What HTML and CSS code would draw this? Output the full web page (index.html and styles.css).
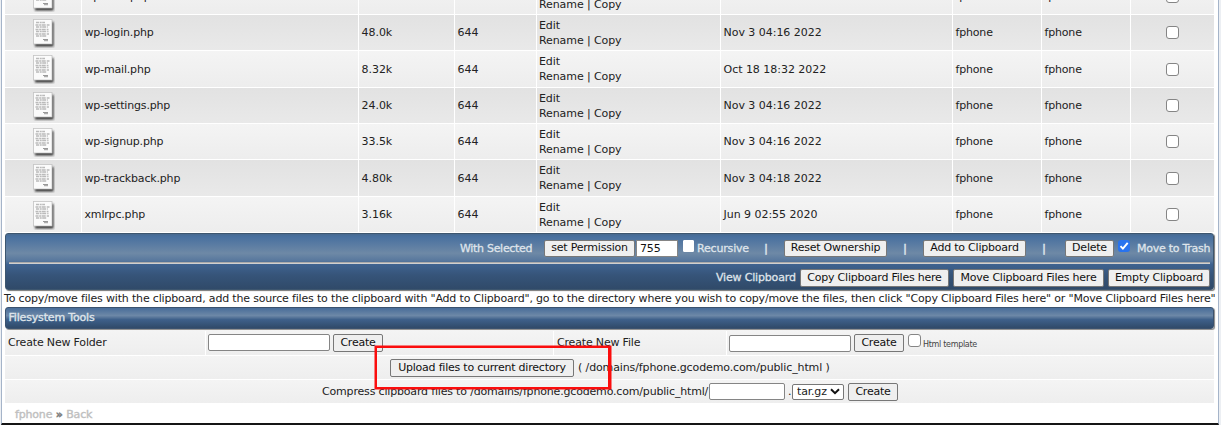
FILE: index.html
```
<!DOCTYPE html>
<html lang="en">
<head>
<meta charset="utf-8">
<title>File Manager</title>
<link rel="stylesheet" href="styles.css">
</head>
<body>
<svg class="defs" width="0" height="0" aria-hidden="true">
  <defs>
    <filter id="soft" x="-20%" y="-20%" width="150%" height="150%"><feGaussianBlur stdDeviation="0.9"/></filter>
    <symbol id="doc" viewBox="0 0 24 30">
      <rect x="4" y="4" width="18.500" height="24.500" fill="#222" opacity=".9" filter="url(#soft)"/>
      <rect x="2.500" y="1.500" width="18.500" height="24.500" fill="#fbfbfb" stroke="#c4c4c4" stroke-width=".8"/>
      <path d="M5 4.500h9M4.500 7h14M5 9h12M4.500 11.500h13M5 13.500h12.500M4.500 16h13.500M5 18h11" stroke="#bbb" stroke-width="1.400" stroke-dasharray="3 .7 2 .5 4 1"/>
      <path d="M12 21.500h5M13 22.700h4" stroke="#999" stroke-width="1"/>
    </symbol>
  </defs>
</svg>
<div class="frame">
  <div class="files" id="files"></div>
  <div class="toolbar">
    <div class="bar-row bar-first">
      <span class="w-selected">With Selected</span>
      <button class="b-perm">set Permission</button>
      <input class="perm" value="755" aria-label="Permission">
      <span class="check bare up"></span>
      <span class="w-recursive">Recursive</span>
      <span class="pipe p1">|</span>
      <button class="b-reset">Reset Ownership</button>
      <span class="pipe p2">|</span>
      <button class="b-add">Add to Clipboard</button>
      <span class="pipe p3">|</span>
      <button class="b-delete">Delete</button>
      <span class="check checked up"><svg viewBox="0 0 12 12"><path d="M2.500 6.200 4.900 8.600 9.700 2.800" fill="none" stroke="#fff" stroke-width="1.900"/></svg></span>
      <span class="w-trash">Move to Trash</span>
    </div>
    <div class="rule"></div>
    <div class="bar-row bar-second">
      <span class="w-view">View Clipboard</span>
      <button class="b-copy">Copy Clipboard Files here</button>
      <button class="b-move">Move Clipboard Files here</button>
      <button class="b-empty">Empty Clipboard</button>
    </div>
  </div>
  <p class="info">To copy/move files with the clipboard, add the source files to the clipboard with "Add to Clipboard", go to the directory where you wish to copy/move the files, then click "Copy Clipboard Files here" or "Move Clipboard Files here"</p>
  <div class="heading">Filesystem Tools</div>
  <div class="tools">
    <div class="create-row">
      <div class="cell"><span class="w-folder">Create New Folder</span></div>
      <div class="cell field-cell"><input class="name-input" aria-label="Folder name"><button class="b-create">Create</button></div>
      <div class="cell"><span class="w-file">Create New File</span></div>
      <div class="cell field-cell file-cell"><input class="name-input" aria-label="File name"><button class="b-create">Create</button><span class="check up"></span><small>Html template</small></div>
    </div>
    <div class="tool-row upload-row">
      <button class="b-upload">Upload files to current directory</button>
      <span class="w-path">( /domains/fphone.gcodemo.com/public_html )</span>
      <div class="highlight"></div>
    </div>
    <div class="tool-row compress-row">
      <span class="w-compress">Compress clipboard files to /domains/fphone.gcodemo.com/public_html/</span>
      <input class="archive" aria-label="Archive name">
      <span class="dot">.</span>
      <span class="select"><span>tar.gz</span><svg viewBox="0 0 10 7"><path d="M1 1.200 5 5.200 9 1.200" fill="none" stroke="#111" stroke-width="2"/></svg></span>
      <button class="b-create">Create</button>
    </div>
  </div>
  <div class="crumbs"><span class="w-user">fphone</span><span class="sep">»</span><span class="w-back">Back</span></div>
</div>
<script src="script.js"></script>
</body>
</html>
```
FILE: styles.css
```
* { box-sizing: border-box; }
body {
  margin: 0;
  width: 1221px;
  height: 425px;
  overflow: hidden;
  background: #eceff3;
  color: #222;
  font: 11px/15px "DejaVu Sans", Verdana, sans-serif;
  letter-spacing: -0.175px;
  white-space: nowrap;
}
.defs { position: absolute; }
.frame {
  margin-left: 1px;
  width: 1218px;
  height: 425px;
  padding: 0 4px 0 3px;
  background: #fff;
  border: solid #a5b4c9;
  border-width: 0 1px;
  border-bottom: 2px solid #151515;
}
.files {
  display: grid;
  grid-template-rows: 14px 35px 36px 35px 35px 36px 35px;
  gap: 1px;
  height: 233px;
  overflow: hidden;
}
.file {
  display: grid;
  grid-template-columns: 76px 276px 95px 81px 183px 231px 88px 88px 83px;
  column-gap: 1px;
}
.file > div {
  display: flex;
  align-items: center;
  padding-left: 2.5px;
  min-width: 0;
  background: linear-gradient(#f4f4f4, #ededed);
}
.file.dark > div { background: linear-gradient(#e2e2e2, #e9e9e9); }
.file:first-child { height: 35px; margin-top: -21px; }
.file > .icon { justify-content: center; padding: 0; }
.icon svg { display: block; width: 24px; height: 30px; }
.file > .mark { justify-content: center; padding: 0; }
.file > .actions { padding-left: 2px; letter-spacing: -0.09px; }
.file > .number { letter-spacing: -0.03px; }
.check {
  display: block;
  flex: none;
  width: 13px;
  height: 13px;
  border: 1px solid #858585;
  border-radius: 3px;
  background: #fff;
}
.bar-first .check { width: 11px; height: 12px; }
.check.bare { border-color: #fff; border-radius: 1px; }
.bar-first .checked { width: 12px; border: 0; background: #2873ef; }
.check svg { display: block; width: 12px; height: 12px; }
.up { margin-top: -5px; }
.toolbar {
  height: 57px;
  padding: 0 3px;
  border: 1px solid #3d566f;
  border-radius: 3px;
  background: linear-gradient(#47698f 0, #48709f 5%, #6e89a6 35%, #57779d 49%, #3f6390 55%, #365479 75%, #304a69);
  box-shadow: 1px 1px 1px #777;
  color: #dfe4eb;
}
.bar-row { display: flex; align-items: center; justify-content: flex-end; }
.bar-row > span { -webkit-text-stroke: 0.3px currentColor; flex: none; }
.bar-first { height: 28px; }
.bar-second { height: 26px; padding-top: 1px; }
.rule { height: 2px; background: #d0d0d0; border-top: 1px solid #aaa; }
button {
  flex: none;
  height: 17px;
  padding: 0;
  border: 1px solid #777;
  border-radius: 2px;
  background: #efefef;
  color: #111;
  font: inherit;
  letter-spacing: -0.22px;
  line-height: 14px;
  text-align: center;
}
input {
  flex: none;
  display: block;
  padding: 0 3px;
  border: 1px solid #858585;
  border-radius: 2px;
  background: #fff;
  color: #111;
  font: inherit;
  letter-spacing: inherit;
}
.w-selected { width: 72px; margin-right: 12px; letter-spacing: -0.3px; }
.b-perm { width: 91px; margin-right: 1px; }
.perm { width: 42px; height: 17px; margin-right: 5px; border-radius: 0; }
.w-recursive { width: 51px; margin-left: 3px; }
.pipe { width: 36px; text-align: center; font-weight: bold; }
.p3 { width: 39px; padding-right: 3px; }
.b-reset, .b-add { width: 103px; }
.b-delete { width: 49px; margin-right: 4px; }
.w-trash { width: 73px; margin-left: 7px; letter-spacing: -0.26px; }
.w-view { width: 79px; margin-right: 5px; }
.b-copy { width: 149px; margin-right: 4px; }
.b-move { width: 151px; margin-right: 4px; }
.b-empty { width: 102px; }
.bar-second button { height: 18px; }
.info { margin: 1px 0 1px -1px; height: 15px; letter-spacing: -0.172px; }
.heading {
  height: 22px;
  padding: 3px 2.5px;
  border: 1px solid #3b526e;
  border-radius: 3px;
  background: linear-gradient(#486d99, #6d88a7 38%, #3e608a 58%, #304a69);
  box-shadow: 1px 1px 1px #888;
  color: #dde3e9;
  line-height: 14px;
  -webkit-text-stroke: 0.4px currentColor;
}
.tools { display: grid; grid-template-rows: 25px 23px 23px; gap: 1px; padding-top: 1px; }
.create-row { display: grid; grid-template-columns: 200px 347px 172px 487px; column-gap: 1px; }
.cell, .tool-row { display: flex; align-items: center; background: linear-gradient(#f4f4f4, #eee); }
.cell { padding-left: 3px; }
.field-cell { padding-left: 2px; }
.name-input { width: 122px; height: 17px; margin-right: 3px; }
.b-create { width: 50px; height: 18px; }
.file-cell .name-input, .file-cell .b-create { margin-top: 1px; }
.file-cell .check { margin-left: 4px; }
small { margin: 4px 0 0 2px; font-size: 8px; line-height: 10px; letter-spacing: -0.3px; color: #444; }
.tool-row { position: relative; }
.upload-row { padding-left: 385px; }
.b-upload { width: 184px; height: 18px; margin-right: 4px; }
.w-path { letter-spacing: -0.12px; }
.highlight {
  position: absolute;
  z-index: 1;
  left: 370px;
  top: -10px;
  width: 236px;
  height: 43px;
  border: 3px solid #fb0d0d;
  border-width: 2px 3px 2px 2px;
  box-shadow: 0 0 0 .5px #fb0d0d;
}
.compress-row { padding-left: 317px; }
.w-compress { width: 387px; flex: none; }
.archive { width: 76px; height: 17px; }
.dot { width: 7px; padding-left: 3px; }
.select {
  display: flex;
  align-items: center;
  justify-content: space-between;
  width: 52px;
  height: 16px;
  margin-right: 4px;
  padding: 0 3px 0 4px;
  border: 1px solid #777;
  border-radius: 2px;
  background: #fff;
}
.select svg { width: 10px; height: 7px; }
.crumbs { display: flex; height: 20px; padding: 4px 0 0 10px; color: #c0c0c0; -webkit-text-stroke: 0.4px currentColor; }
.sep { width: 14px; text-align: center; color: #777; font-weight: bold; }
```
FILE: script.js
```
const files = [
  ["wp-load.php", "3.84k", "Nov 3 04:16 2022"],
  ["wp-login.php", "48.0k", "Nov 3 04:16 2022"],
  ["wp-mail.php", "8.32k", "Oct 18 18:32 2022"],
  ["wp-settings.php", "24.0k", "Nov 3 04:16 2022"],
  ["wp-signup.php", "33.5k", "Nov 3 04:16 2022"],
  ["wp-trackback.php", "4.80k", "Nov 3 04:18 2022"],
  ["xmlrpc.php", "3.16k", "Jun 9 02:55 2020"]
];
document.getElementById("files").innerHTML = files.map(([name, size, date], i) => `
  <div class="file ${i % 2 ? "dark" : ""}">
    <div class="icon"><svg><use href="#doc"/></svg></div>
    <div><span>${name}</span></div>
    <div class="number"><span>${size}</span></div>
    <div class="number"><span>644</span></div>
    <div class="actions"><span>Edit<br>Rename | Copy</span></div>
    <div class="number"><span>${date}</span></div>
    <div><span>fphone</span></div>
    <div><span>fphone</span></div>
    <div class="mark"><span class="check"></span></div>
  </div>`).join("");
```
